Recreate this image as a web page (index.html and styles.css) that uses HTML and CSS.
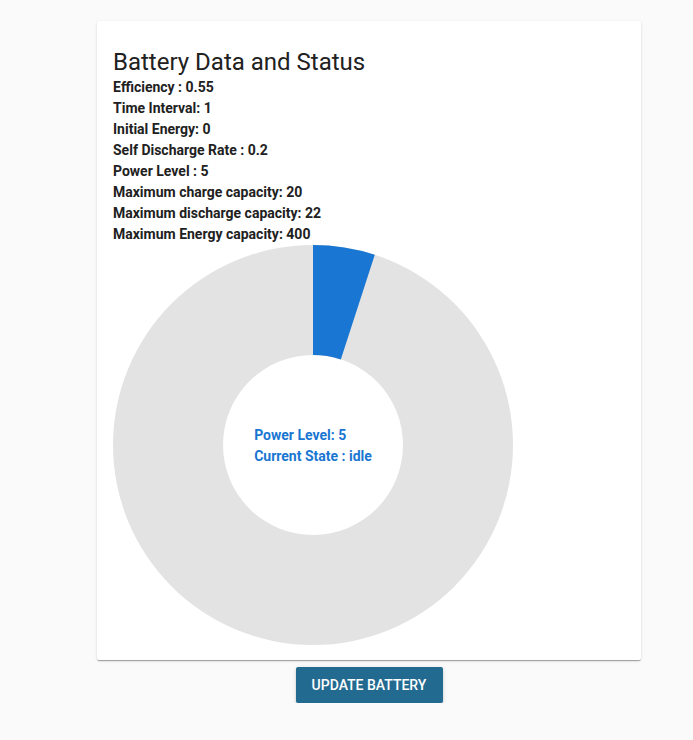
FILE: index.html
```html
<!DOCTYPE html>
<html>
<head>
<meta charset="utf-8">
<link rel="stylesheet" href="styles.css">
</head>
<body>
<div class="page">
  <div class="card">
    <h2 class="title">Battery Data and Status</h2>
    <div class="info">
      <div>Efficiency : 0.55</div>
      <div>Time Interval: 1</div>
      <div>Initial Energy: 0</div>
      <div>Self Discharge Rate : 0.2</div>
      <div>Power Level : 5</div>
      <div>Maximum charge capacity: 20</div>
      <div>Maximum discharge capacity: 22</div>
      <div>Maximum Energy capacity: 400</div>
    </div>
    <div class="chart">
      <svg width="400" height="400" viewBox="0 0 400 400">
        <path d="M200 0 A200 200 0 1 1 200 400 A200 200 0 1 1 200 0 Z M200 110 A90 90 0 1 0 200 290 A90 90 0 1 0 200 110 Z" fill="#e3e3e3" fill-rule="evenodd"/>
        <path d="M200 0 A200 200 0 0 1 261.8 9.79 L227.81 114.4 A90 90 0 0 0 200 110 Z" fill="#1976d2"/>
      </svg>
      <div class="center">
        <div class="center-text">
          <div>Power Level: 5</div>
          <div>Current State : idle</div>
        </div>
      </div>
    </div>
  </div>
  <div class="actions">
    <button class="btn">UPDATE BATTERY</button>
  </div>
</div>
</body>
</html>
```
FILE: styles.css
```css
html, body {
  margin: 0;
  padding: 0;
  background: #fafafa;
  font-family: Roboto, "Liberation Sans", sans-serif;
}
.page {
  padding-top: 21px;
  padding-left: 97px;
  width: 544px;
}
.card {
  background: #fff;
  box-shadow: 0 2px 1px -1px rgba(0,0,0,0.2), 0 1px 1px 0 rgba(0,0,0,0.14), 0 1px 3px 0 rgba(0,0,0,0.12);
  border-radius: 2px;
  padding: 16px 16px 15px 16px;
}
.title {
  margin: 11px 0 0 0;
  font-size: 24px;
  font-weight: 400;
  line-height: 28px;
  color: #212121;
}
.info {
  margin-top: 1px;
  font-size: 14px;
  font-weight: 700;
  line-height: 21px;
  color: #212121;
}
.chart {
  position: relative;
  width: 400px;
  height: 400px;
}
.chart svg {
  display: block;
}
.center {
  position: absolute;
  inset: 0;
  display: flex;
  align-items: center;
  justify-content: center;
}
.center-text {
  font-size: 14px;
  font-weight: 700;
  line-height: 21px;
  color: #1976d2;
  padding-top: 1px;
}
.actions {
  display: flex;
  justify-content: center;
  padding-top: 7px;
}
.btn {
  background: #236a91;
  color: #fff;
  border: none;
  border-radius: 2px;
  height: 36px;
  width: 147px;
  padding: 0;
  font-family: Roboto, "Liberation Sans", sans-serif;
  font-size: 14px;
  font-weight: 500;
  box-shadow: 0 3px 1px -2px rgba(0,0,0,0.2), 0 2px 2px 0 rgba(0,0,0,0.14), 0 1px 5px 0 rgba(0,0,0,0.12);
}
```
